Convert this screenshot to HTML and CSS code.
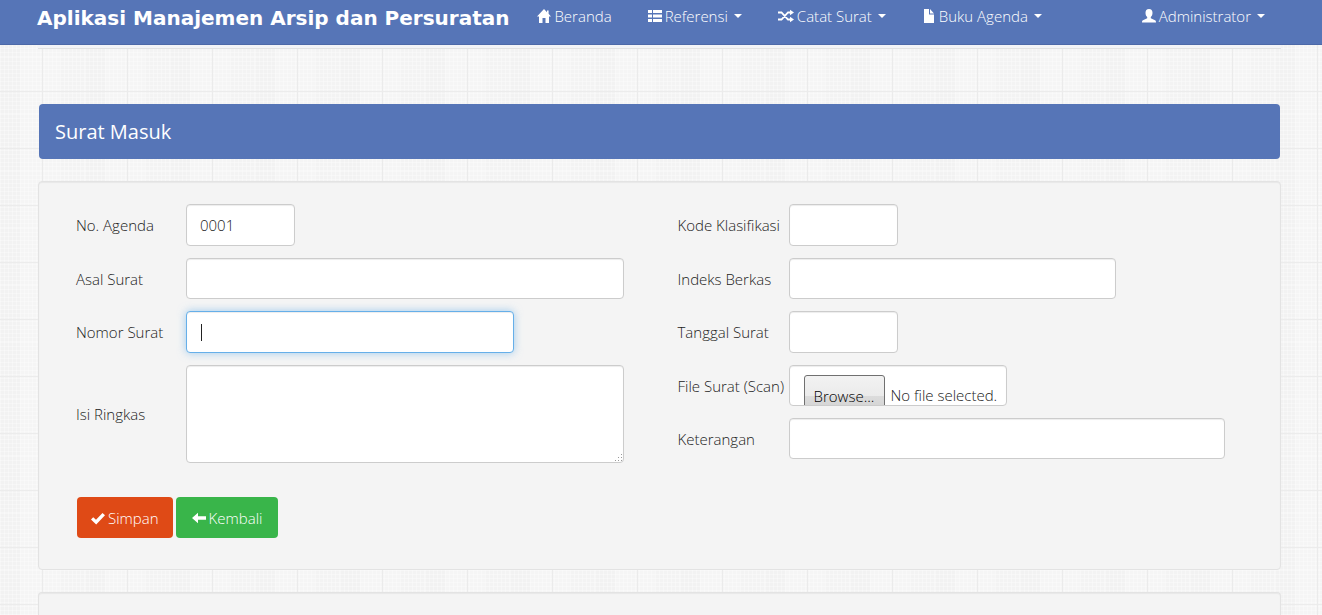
FILE: index.html
```html
<!DOCTYPE html>
<html lang="id">
<head>
<meta charset="utf-8">
<meta name="viewport" content="width=device-width, initial-scale=1">
<title>Aplikasi Manajemen Arsip dan Persuratan</title>
<link rel="stylesheet" href="styles.css">
</head>
<body>
<header class="navbar">
  <a class="brand" href="#">Aplikasi Manajemen Arsip dan Persuratan</a>
  <nav class="menu">
    <a class="menu-link" href="#"><svg class="icon" viewBox="0 0 14 14"><path d="M7 0 0 7.400h2V14h3.500V9h3v5H12V7.400h2L11.600 4.800V1.500H10v1.700z"/></svg>Beranda</a>
    <a class="menu-link" href="#"><svg class="icon" viewBox="0 0 14 14"><path d="M0 1h4v3H0zM5 1h9v3H5zM0 5.500h4v3H0zM5 5.500h9v3H5zM0 10h4v3H0zM5 10h9v3H5z"/></svg>Referensi<span class="caret"></span></a>
    <a class="menu-link" href="#"><svg class="icon icon-wide" viewBox="0 0 16 14"><path d="M0 3.500h3.500L10 10.500h2.500M0 10.500h3.500L10 3.500h2.500" fill="none" stroke="currentColor" stroke-width="1.800"/><path d="M12 .8 16 3.500 12 6.200zM12 7.800l4 2.700-4 2.700z"/></svg>Catat Surat<span class="caret"></span></a>
    <a class="menu-link" href="#"><svg class="icon" viewBox="0 0 14 14"><path d="M2 0h5v5.500h5V14H2zM8 0l4 4.500H8z"/></svg>Buku Agenda<span class="caret"></span></a>
  </nav>
  <a class="menu-link account" href="#"><svg class="icon" viewBox="0 0 14 14"><path d="M7 0C4.600 0 3.500 1.600 3.500 3.800 3.500 6 4.300 7.300 5.200 8v1.300L1 11.300C.3 11.700 0 12.200 0 13.500h14c0-1.300-.3-1.800-1-2.200L8.800 9.300V8c.9-.7 1.700-2 1.700-4.200C10.500 1.600 9.400 0 7 0z"/></svg>Administrator<span class="caret"></span></a>
</header>
<main class="page">
  <div class="panel-end"></div>
  <h1 class="title">Surat Masuk</h1>
  <form class="panel">
    <div class="columns">
      <div class="fields fields-left">
        <label for="agenda">No. Agenda</label>
        <input class="control tall quarter" id="agenda" type="text" value="0001">
        <label for="asal">Asal Surat</label>
        <input class="control" id="asal" type="text">
        <label for="nomor">Nomor Surat</label>
        <input class="control tall wide steady-caret" id="nomor" type="text" placeholder=" " autofocus>
        <label for="isi">Isi Ringkas</label>
        <textarea class="control area" id="isi"></textarea>
      </div>
      <div class="fields fields-right">
        <label for="kode">Kode Klasifikasi</label>
        <input class="control tall quarter" id="kode" type="text">
        <label for="indeks">Indeks Berkas</label>
        <input class="control wide" id="indeks" type="text">
        <label for="tanggal">Tanggal Surat</label>
        <input class="control tall quarter" id="tanggal" type="text">
        <label for="browse">File Surat (Scan)</label>
        <div class="control file"><button class="browse" id="browse" type="button">Browse...</button><span>No file selected.</span></div>
        <label for="keterangan">Keterangan</label>
        <input class="control" id="keterangan" type="text">
      </div>
    </div>
    <div class="actions">
      <button class="btn save" type="submit"><svg class="icon" viewBox="0 0 14 14"><path d="M0 8.500 2.200 6.200 5 8.800 11.500 2 14 4.300 5.200 13.500z"/></svg>Simpan</button>
      <button class="btn back" type="button"><svg class="icon" viewBox="0 0 14 14"><path d="M0 7 6 1.800V5.200h8v3.600H6v3.400z"/></svg>Kembali</button>
    </div>
  </form>
  <footer class="panel footer"></footer>
</main>
</body>
</html>
```
FILE: styles.css
```css
* { box-sizing: border-box; }

body {
  margin: 0;
  color: #222;
  font: 300 15px/20px "Open Sans", "Noto Sans", sans-serif;
  background-color: #f3f3f3;
  background-image:
    linear-gradient(90deg, transparent 42px, #ebebeb 42px, #ebebeb 43px, transparent 43px),
    linear-gradient(transparent 34px, #ececec 34px, #ececec 35px, transparent 35px),
    repeating-linear-gradient(90deg, rgba(255, 255, 255, .3) 0 1px, transparent 1px 4px),
    repeating-linear-gradient(rgba(255, 255, 255, .3) 0 1px, transparent 1px 4px),
    linear-gradient(90deg, #f2f2f2 20px, #f5f5f5 20px, #f5f5f5 60px, #f3f3f3 60px);
  background-size: 85px 85px, 57px 57px, 85px 85px, 85px 57px, 85px 85px;
}

.navbar {
  display: flex;
  align-items: flex-start;
  height: 45px;
  padding: 6px 57px 0 37px;
  color: #fff;
  background: #5675b7;
  border-bottom: 1px solid #4d69a8;
}

.brand {
  margin-right: 28px;
  color: inherit;
  font: bold 20px/24px "DejaVu Sans", Verdana, sans-serif;
  text-decoration: none;
  white-space: nowrap;
}

.menu { display: flex; gap: 36px; }

.menu-link {
  display: flex;
  align-items: center;
  gap: 3px;
  color: inherit;
  text-decoration: none;
  white-space: nowrap;
}

.account { margin-left: auto; }

.icon { width: 14px; height: 14px; flex: none; fill: currentColor; }
.icon-wide { width: 16px; }

.caret {
  margin-left: 3px;
  border: 4px solid transparent;
  border-top-color: currentColor;
  border-bottom: 0;
}

.page { padding: 0 41px 0 38px; }

.panel-end {
  height: 4px;
  margin-bottom: 55px;
  background: #f3f4f7;
  border-bottom: 1px solid #e2e2e2;
}

.title {
  margin: 0 1px 22px;
  padding: 16px 16px 15px;
  color: #fff;
  font-size: 20px;
  font-weight: 400;
  line-height: 24px;
  background: #5675b7;
  border-radius: 4px;
}

.panel {
  margin-bottom: 22px;
  padding: 22px 55px 31px 37px;
  background: #f4f4f4;
  border: 1px solid #e3e3e3;
  border-radius: 4px;
  box-shadow: inset 0 1px 1px rgba(0, 0, 0, .05);
}

.footer {
  margin-bottom: 0;
  padding: 11px;
  border-bottom: 0;
  border-radius: 4px 4px 0 0;
}

.columns { display: grid; grid-template-columns: 1fr 1fr; gap: 54px; }

.fields { display: grid; align-content: start; align-items: center; gap: 12px 0; }
.fields-left { grid-template-columns: 110px 1fr; }
.fields-right { grid-template-columns: 111px 1fr; }
.fields label { white-space: nowrap; }

.control {
  width: 100%;
  height: 41px;
  padding: 8px 13px;
  color: #222;
  font: inherit;
  background: #fff;
  border: 1px solid #ccc;
  border-radius: 4px;
  box-shadow: inset 0 1px 1px rgba(0, 0, 0, .075);
}

.tall { height: 42px; }
.quarter { width: 25%; }
.wide { width: 75%; }
.area { display: block; height: 98px; resize: vertical; }

.area::-webkit-resizer {
  background:
    linear-gradient(135deg, #fff 66%, transparent 66%),
    radial-gradient(circle, #999 1px, transparent 1px) 0 0 / 3px 3px;
}

.control:focus {
  outline: 0;
  border-color: #66afe9;
  box-shadow: inset 0 1px 1px rgba(0, 0, 0, .075), 0 0 8px rgba(102, 175, 233, .6);
}

/* Non-blinking insertion mark while the field is empty */
.steady-caret:focus:placeholder-shown {
  caret-color: transparent;
  background: linear-gradient(#222, #222) 14px 50% / 1px 17px no-repeat #fff;
}

.file {
  display: flex;
  gap: 6px;
  width: 50%;
  padding: 9px 0 0 14px;
  overflow: hidden;
  white-space: nowrap;
}

.file span { padding-top: 10px; }

.browse {
  flex: none;
  height: 42px;
  width: 81px;
  padding: 0;
  color: #000;
  font: inherit;
  background: linear-gradient(#f2f2f2, #ebebeb 50%, #dcdcdc 50%, #cfcfcf);
  border: 1px solid #707070;
  border-radius: 3px;
}

.actions { display: flex; gap: 3px; margin: 34px 0 0 1px; }

.btn {
  display: flex;
  align-items: center;
  gap: 3px;
  height: 41px;
  padding: 0 14px;
  color: #fff;
  font: inherit;
  border: 0;
  border-radius: 4px;
}

.save { background: #df4a16; }
.back { padding: 0 16px; background: #39b54a; }
```
